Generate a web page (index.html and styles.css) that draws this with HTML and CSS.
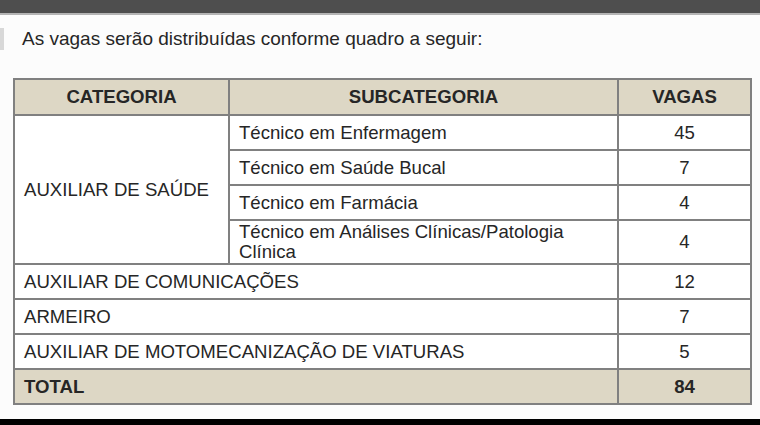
FILE: index.html
```html
<!DOCTYPE html>
<html lang="pt">
<head>
<meta charset="utf-8">
<link rel="stylesheet" href="styles.css">
</head>
<body>
<div class="topbar"></div>
<div class="page">
  <p class="intro"><span class="mark"></span>As vagas serão distribuídas conforme quadro a seguir:</p>
  <table class="quadro">
    <colgroup>
      <col class="c1"><col class="c2"><col class="c3">
    </colgroup>
    <thead>
      <tr class="head"><th>CATEGORIA</th><th>SUBCATEGORIA</th><th>VAGAS</th></tr>
    </thead>
    <tbody>
      <tr><td rowspan="4" class="cat">AUXILIAR DE SAÚDE</td><td>Técnico em Enfermagem</td><td class="num">45</td></tr>
      <tr><td>Técnico em Saúde Bucal</td><td class="num">7</td></tr>
      <tr><td>Técnico em Farmácia</td><td class="num">4</td></tr>
      <tr class="tall"><td>Técnico em Análises Clínicas/Patologia Clínica</td><td class="num">4</td></tr>
      <tr><td colspan="2">AUXILIAR DE COMUNICAÇÕES</td><td class="num">12</td></tr>
      <tr><td colspan="2">ARMEIRO</td><td class="num">7</td></tr>
      <tr><td colspan="2">AUXILIAR DE MOTOMECANIZAÇÃO DE VIATURAS</td><td class="num">5</td></tr>
      <tr class="total"><td colspan="2">TOTAL</td><td class="num">84</td></tr>
    </tbody>
  </table>
</div>
<div class="bottombar"></div>
</body>
</html>
```

FILE: styles.css
```css
html, body {
  margin: 0;
  padding: 0;
  background: #fdfdfd;
  font-family: "Liberation Sans", Arial, sans-serif;
  color: #262626;
}
body {
  width: 760px;
  height: 425px;
  overflow: hidden;
  display: flex;
  flex-direction: column;
}
.topbar {
  height: 13px;
  background: #4e4e4e;
  border-bottom: 2px solid #b4b4b4;
  flex: none;
}
.page {
  flex: 1;
  padding: 0 0 0 13px;
  background: #fcfcfc;
}
.intro {
  position: relative;
  margin: 12px 0 0 9px;
  font-size: 19px;
  line-height: 24px;
  height: 51px;
}
.mark {
  position: absolute;
  left: -22px;
  top: 1px;
  width: 4px;
  height: 22px;
  background: #d8d8d8;
}
.quadro {
  border-collapse: collapse;
  width: 737px;
  table-layout: fixed;
  font-size: 18.6px;
  background: #fff;
}
.c1 { width: 215px; }
.c2 { width: 389px; }
.c3 { width: 133px; }
.quadro th, .quadro td {
  border: 2px solid #808080;
  padding: 0 9px;
  height: 33px;
  text-align: left;
  vertical-align: middle;
  line-height: 20px;
}
.quadro th {
  background: #ddd7c5;
  text-align: center;
  font-weight: bold;
  height: 34px;
}
.quadro td.num { text-align: center; }
.quadro tr.tall td { height: 42px; }
.quadro tr.total td {
  background: #ddd7c5;
  font-weight: bold;
}
.bottombar {
  height: 6px;
  background: #000;
  flex: none;
}
```
